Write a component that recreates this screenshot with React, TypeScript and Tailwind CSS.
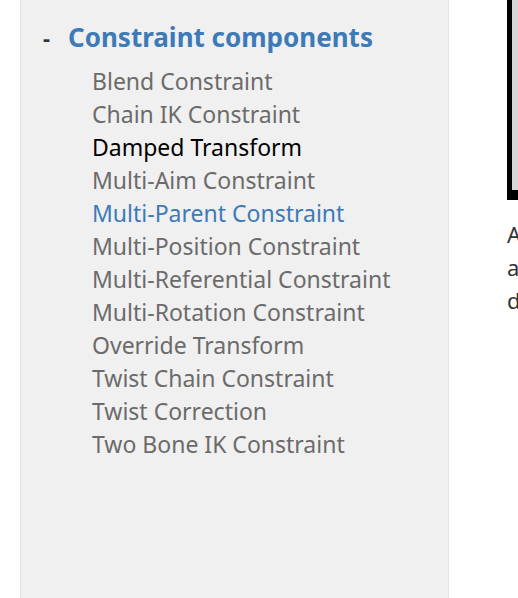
const ITEMS = [
  "Blend Constraint",
  "Chain IK Constraint",
  "Damped Transform",
  "Multi-Aim Constraint",
  "Multi-Parent Constraint",
  "Multi-Position Constraint",
  "Multi-Referential Constraint",
  "Multi-Rotation Constraint",
  "Override Transform",
  "Twist Chain Constraint",
  "Twist Correction",
  "Two Bone IK Constraint",
];

function Item({ name }: { name: string }) {
  let color = "text-[#6b6b6b]";
  if (name === "Damped Transform") color = "text-black";
  if (name === "Multi-Parent Constraint") color = "text-[#3d7ab8]";
  return <li className={`${color} text-[23px] leading-[33px] whitespace-nowrap`}>{name}</li>;
}

export default function App() {
  return (
    <div className="flex h-[598px] w-[518px] overflow-hidden bg-white font-['Noto_Sans',sans-serif]">
      <div className="w-[20px] shrink-0" />
      <aside className="w-[429px] shrink-0 bg-[#f0f0f0] border-x border-[#e4e4e4] pt-[18px]">
        <div className="flex items-center pl-[22px] h-[38px]">
          <span className="w-[25px] text-[22px] font-bold text-[#333]">-</span>
          <span className="text-[26px] font-bold text-[#3d7ab8] whitespace-nowrap">Constraint components</span>
        </div>
        <ul className="pl-[71px] pt-[9px]">
          {ITEMS.map((n) => (
            <Item key={n} name={n} />
          ))}
        </ul>
      </aside>
      <div className="flex-1 pl-[58px] overflow-hidden">
        <div className="h-[200px] w-[40px] bg-black pl-[5px] pb-[10px]">
          <div className="h-full w-full bg-[#d6d6d6]" />
        </div>
        <div className="pt-[18px] text-[22px] leading-[33px] text-[#333]">
          <div>A</div>
          <div>a</div>
          <div>d</div>
        </div>
      </div>
    </div>
  );
}
